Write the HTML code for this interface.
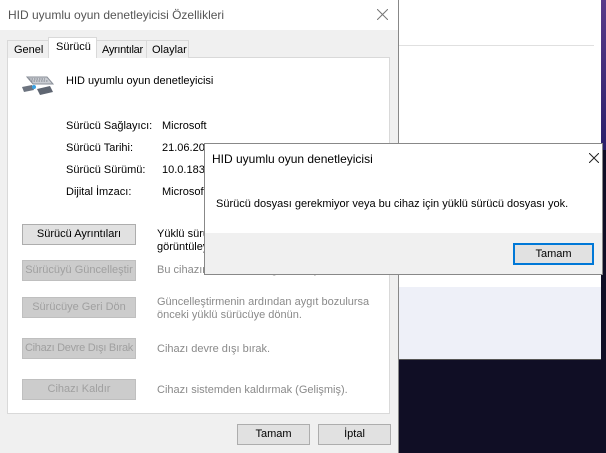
<!DOCTYPE html>
<html><head><meta charset="utf-8"><style>
*{margin:0;padding:0;box-sizing:border-box}
body{width:606px;height:453px;overflow:hidden;position:relative;background:#100e25;font-family:"Liberation Sans",sans-serif;font-size:11px;color:#000}
.a{position:absolute;white-space:nowrap}
.btn{position:absolute;background:#e1e1e1;border:1px solid #adadad;text-align:center;line-height:19px;height:21px;white-space:nowrap;overflow:hidden}
.dis{color:#a0a0a0;background:#cccccc;border-color:#bfbfbf}
</style></head><body>
<div class="a" style="left:398px;top:0;width:203px;height:360px;background:#fff"></div>
<div class="a" style="left:399px;top:287px;width:202px;height:72px;background:#eef0f8"></div>
<div class="a" style="left:399px;top:359px;width:202px;height:1px;background:#555"></div>
<div class="a" style="left:399px;top:45px;width:195px;height:1px;background:#e0e0e0"></div>
<div class="a" style="left:601px;top:0;width:5px;height:150px;background:linear-gradient(#5a3a8a,#2a1f6a)"></div>
<div class="a" style="left:0;top:0;width:399px;height:453px;background:#f0f0f0;border-right:1px solid #888"></div>
<div class="a" style="left:0;top:0;width:398px;height:30px;background:#fff"></div>
<div class="a" style="left:8px;top:8px;font-size:12px;color:#555">HID uyumlu oyun denetleyicisi Özellikleri</div>
<svg class="a" style="left:377px;top:9px" width="11" height="11"><path d="M0 0L11 11M11 0L0 11" stroke="#777" stroke-width="1"/></svg>
<div class="a" style="left:7px;top:57px;width:383px;height:357px;background:#fff;border:1px solid #d9d9d9"></div>
<div class="a" style="left:7px;top:40px;width:42px;height:18px;border:1px solid #d9d9d9;border-bottom:none;background:#f0f0f0;padding:3px 0 0 6px">Genel</div>
<div class="a" style="left:48px;top:37px;width:49px;height:21px;border:1px solid #d9d9d9;border-bottom:none;background:#fff;padding:3px 0 0 7px">Sürücü</div>
<div class="a" style="left:96px;top:40px;width:51px;height:18px;border:1px solid #d9d9d9;border-bottom:none;background:#f0f0f0;padding:3px 0 0 5px;letter-spacing:-0.3px">Ayrıntılar</div>
<div class="a" style="left:146px;top:40px;width:43px;height:18px;border:1px solid #d9d9d9;border-bottom:none;background:#f0f0f0;padding:3px 0 0 5px">Olaylar</div>
<svg class="a" style="left:20px;top:74px" width="34" height="24">
<path d="M7 3L27 3L33 10L13 10Z" fill="#c9ccd2" stroke="#8a8f98"/>
<path d="M9 5h16M11 7h17" stroke="#7a7f88" stroke-dasharray="1.5 1"/>
<path d="M2 13L12 11L14 16L4 18Z" fill="#6d7480"/>
<path d="M17 15L30 12L33 18L20 21Z" fill="#5f6672"/>
<circle cx="14" cy="13" r="2" fill="#3aa0e0"/>
</svg>
<div class="a" style="left:66px;top:75px">HID uyumlu oyun denetleyicisi</div>
<div class="a" style="left:66px;top:120px">Sürücü Sağlayıcı:</div><div class="a" style="left:162px;top:120px">Microsoft</div>
<div class="a" style="left:66px;top:142px">Sürücü Tarihi:</div><div class="a" style="left:162px;top:142px">21.06.2006</div>
<div class="a" style="left:66px;top:164px">Sürücü Sürümü:</div><div class="a" style="left:162px;top:164px">10.0.18362.1</div>
<div class="a" style="left:66px;top:186px">Dijital İmzacı:</div><div class="a" style="left:162px;top:186px">Microsoft</div>
<div class="btn" style="left:22px;top:224px;width:114px">Sürücü Ayrıntıları</div>
<div class="a" style="left:157px;top:228px;line-height:13px">Yüklü sürücü dosyaları hakkındaki<br>görüntüleyin.</div>
<div class="btn dis" style="left:22px;top:260px;width:114px">Sürücüyü Güncelleştir</div>
<div class="a" style="left:157px;top:264px;color:#8a8a8a">Bu cihazın sürücüsünü güncelleştirin.</div>
<div class="btn dis" style="left:22px;top:297px;width:114px">Sürücüye Geri Dön</div>
<div class="a" style="left:157px;top:296px;line-height:13px;color:#8a8a8a">Güncelleştirmenin ardından aygıt bozulursa<br>önceki yüklü sürücüye dönün.</div>
<div class="btn dis" style="left:22px;top:338px;width:114px;letter-spacing:-0.3px">Cihazı Devre Dışı Bırak</div>
<div class="a" style="left:157px;top:343px;color:#8a8a8a">Cihazı devre dışı bırak.</div>
<div class="btn dis" style="left:22px;top:379px;width:114px">Cihazı Kaldır</div>
<div class="a" style="left:157px;top:384px;color:#8a8a8a">Cihazı sistemden kaldırmak (Gelişmiş).</div>
<div class="btn" style="left:237px;top:424px;width:73px">Tamam</div>
<div class="btn" style="left:318px;top:424px;width:73px">İptal</div>
<div class="a" style="left:204px;top:143px;width:399px;height:132px;background:#fff;border:1px solid #888"></div>
<div class="a" style="left:205px;top:233px;width:397px;height:41px;background:#f0f0f0"></div>
<div class="a" style="left:212px;top:152px;font-size:12px">HID uyumlu oyun denetleyicisi</div>
<svg class="a" style="left:589px;top:153px" width="10" height="10"><path d="M0 0L10 10M10 0L0 10" stroke="#222" stroke-width="1"/></svg>
<div class="a" style="left:216px;top:198px;font-size:11px">Sürücü dosyası gerekmiyor veya bu cihaz için yüklü sürücü dosyası yok.</div>
<div class="a" style="left:513px;top:243px;width:81px;height:22px;background:#e1e1e1;border:2px solid #0078d7;text-align:center;line-height:18px">Tamam</div>
</body></html>
